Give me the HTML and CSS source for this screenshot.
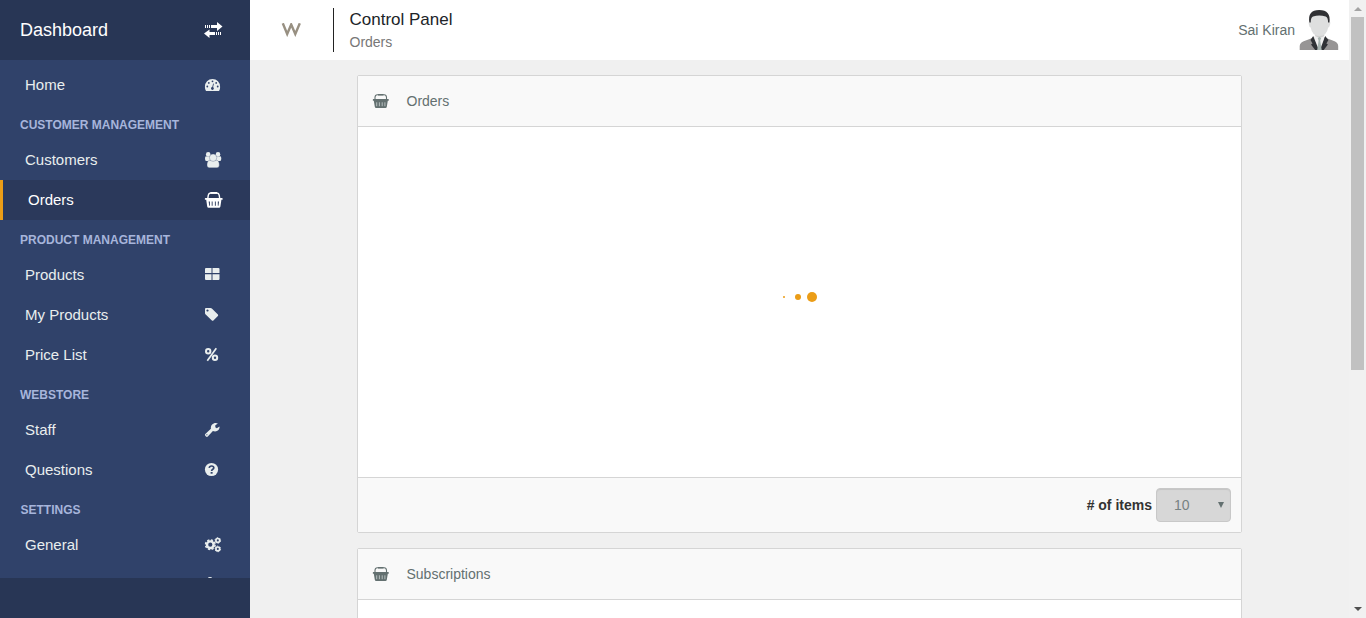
FILE: index.html
```html
<!DOCTYPE html>
<html lang="en">
<head>
<meta charset="utf-8">
<title>Control Panel</title>
<link rel="stylesheet" href="styles.css">
</head>
<body>
<svg class="defs" width="0" height="0">
  <symbol id="basket" viewBox="0 0 20 20">
    <path d="M3.800 8.500 4.300 5.200Q4.700 3 6.500 3H13Q14.800 3 15.200 5.200L15.700 8.500" fill="none" stroke="currentColor" stroke-width="1.400"/>
    <path d="M6.500 2h6.500v1.800H6.500z"/>
    <path fill-rule="evenodd" d="M1.500 8h16.500q.7 0 .7.900t-.7.900h-.6l-1 6.700q-.2 1.200-1.400 1.200H4.600Q3.400 17.700 3.200 16.500L2.200 9.800h-.7q-.7 0-.7-.9T1.500 8zM4.700 11.500l.5 4.300h.7V11.500zM7.700 11.500v4.300h.9V11.500zM10.900 11.500v4.300h.9V11.500zM13.800 11.500v4.300h.7l.5-4.300z"/>
  </symbol>
  <symbol id="basket-small" viewBox="0 0 18 18">
    <path d="M3 7.500V5.300Q3.200 2.700 5.300 2.700h6.900Q14.300 2.700 14.500 5.300V7.500" fill="none" stroke="currentColor" stroke-width="1.100"/>
    <path d="M6 2h5.500v1.500H6z"/>
    <path d="M1.300 7h15q.5 0 .5.900t-.5.900h-.5l-1 5.900q-.2 1.300-1.300 1.300H4.200Q3 16 2.800 14.700L1.800 8.800h-.5Q.8 8.800.8 7.900T1.300 7z"/>
    <path d="M4.700 10.300v3.900M7.400 10.300v3.900M10.200 10.300v3.900M12.900 10.300v3.900" stroke="#b7bfbf" stroke-width="1"/>
  </symbol>
</svg>
<div class="app">
  <aside class="sidebar">
    <div class="brand"><span>Dashboard</span>
      <svg class="icon" viewBox="0 0 20 20"><path d="M1 5h1v3H1zM3 5h1v3H3zM5 5h1v3H5zM7 5h6V2l5.500 4.500L13 11V8H7zM5.500 9.500V12H11v3H5.500v3L0 13.500zM12 12h1v3h-1zM14 12h1v3h-1zM16 12h1v3h-1z"/></svg>
    </div>
    <nav class="menu">
      <a class="item"><span>Home</span><svg class="icon" viewBox="0 0 20 20"><path fill-rule="evenodd" d="M8.500 4a7.600 7.600 0 0 1 7.600 7.900c0 1.500-.4 3-1.100 4.100H2A7.900 7.900 0 0 1 .9 11.900 7.600 7.600 0 0 1 8.500 4z"/><g fill="#30426a"><circle cx="3.300" cy="11.500" r=".9"/><circle cx="4.800" cy="7.900" r=".9"/><circle cx="8.500" cy="6.300" r=".9"/><circle cx="12.200" cy="7.900" r=".9"/><circle cx="13.700" cy="11.500" r=".9"/><circle cx="8.400" cy="13.500" r="1.400"/><path d="m9.100 8.500.8.200-1.100 4.600-.8-.2z"/></g></svg></a>
      <h2 class="section">CUSTOMER MANAGEMENT</h2>
      <a class="item"><span>Customers</span><svg class="icon" viewBox="0 0 20 20"><circle cx="4.200" cy="4.400" r="2.300"/><circle cx="14" cy="4.400" r="2.300"/><path d="M1 8.500Q1 6 2.500 6.400h4V11H2.300Q1 11 1 8.500zM17.300 8.500q0-2.500-1.500-2.100h-4V11H16q1.300 0 1.300-2.500z"/><g stroke="#30426a" stroke-width=".3"><path d="M3 15q0-4.500 2.800-4.800h6.700q2.800.3 2.800 4.800 0 2.800-2.300 2.800H5.300Q3 17.800 3 15z"/><circle cx="9.100" cy="7.700" r="3.700"/></g></svg></a>
      <a class="item active"><span>Orders</span><svg class="icon"><use href="#basket"/></svg></a>
      <h2 class="section">PRODUCT MANAGEMENT</h2>
      <a class="item"><span>Products</span><svg class="icon" viewBox="0 0 20 20"><path d="M2 3h5.500v5H1V4q0-1 1-1zM8.500 3h6q1 0 1 1v4h-7zM1 9.300h6.500V15H2q-1 0-1-1zM8.500 9.300h7V14q0 1-1 1h-6z"/></svg></a>
      <a class="item"><span>My Products</span><svg class="icon" viewBox="0 0 20 20"><path fill-rule="evenodd" d="M1 4q0-1 1-1h4.400q1 0 1.700.7l5.800 5.700q.6.700 0 1.500l-4.500 4.500q-.8.700-1.500 0L1.700 9.600Q1 9 1 8zM3.500 4.400a1.100 1.100 0 1 0 .01 0z"/></svg></a>
      <a class="item"><span>Price List</span><svg class="icon" viewBox="0 0 20 20"><path d="M12.300 3.300 3.300 15.800" stroke="currentColor" stroke-width="1.700"/><g fill="none" stroke="currentColor" stroke-width="2"><circle cx="4.200" cy="6.200" r="2.200"/><circle cx="11" cy="12.800" r="2.200"/></g></svg></a>
      <h2 class="section">WEBSTORE</h2>
      <a class="item"><span>Staff</span><svg class="icon" viewBox="0 0 20 20"><path fill-rule="evenodd" d="M8.900 11.100 3.800 16.600q-.9.800-1.800 0l-.7-.8q-.8-.9 0-1.700L6.900 8.700C6.500 5.200 9 3 11.700 3q1.200 0 2.200.6L11.300 5.300v2l1.500.9 2.700-1.700c.4 2.500-1.700 4.900-4.400 4.900q-1.200 0-2.200-.3zM2.900 14.200a.6.600 0 1 0 .01 0z"/></svg></a>
      <a class="item"><span>Questions</span><svg class="icon" viewBox="0 0 20 20"><circle cx="7.500" cy="9.500" r="6.600"/><path d="M5.200 7.900Q5.500 6 7.600 6t2.200 1.700c0 1.600-2.200 1.500-2.200 3.400" fill="none" stroke="#30426a" stroke-width="1.700"/><path d="M6.600 12h2v1.700h-2z" fill="#30426a"/></svg></a>
      <h2 class="section settings">SETTINGS</h2>
      <a class="item"><span>General</span><svg class="icon" viewBox="0 0 20 20"><g fill="none" stroke="currentColor"><circle cx="6.300" cy="9.700" r="3.300" stroke-width="2.400"/><circle cx="6.300" cy="9.700" r="4.800" stroke-width="1.500" stroke-dasharray="2.200 1.570"/><circle cx="13.800" cy="5.400" r="1.900" stroke-width="1.700"/><circle cx="13.800" cy="5.400" r="2.800" stroke-width=".9" stroke-dasharray="1.500 1.430"/><circle cx="13.800" cy="13.900" r="1.900" stroke-width="1.700"/><circle cx="13.800" cy="13.900" r="2.800" stroke-width=".9" stroke-dasharray="1.500 1.430"/></g></svg></a>
      <a class="item"><span></span><svg class="icon" viewBox="0 0 20 20"><path d="M4 3q0-1 2-1t2 1v12H4z"/></svg></a>
    </nav>
    <div class="sidebar-footer"></div>
  </aside>
  <div class="page">
    <header class="topbar">
      <svg class="logo" viewBox="0 0 20 14"><path d="M1.800.300 6.200 11 10.200 1.500 14.300 11 18.800.300" fill="none" stroke="#989082" stroke-width="2.400"/></svg>
      <div class="heading"><div class="title">Control Panel</div><div class="crumb">Orders</div></div>
      <div class="user"><span>Sai Kiran</span>
        <svg class="avatar" viewBox="-.7 0 40 40"><path d="M0 40v-4q0-4 6-5.500l8-3h11l8 3q5.500 1.500 5.500 5.500v4z" fill="#979595"/><path d="M15.500 24h9v6L21 40h-3l-4-11z" fill="#efefef"/><path d="M15.500 24h9v2q-4.500 3-9 0z" fill="#cfcfcf"/><path d="m13.500 26-2.700 4 2 3.500-1.500 1L15.500 40h3.700zM25.500 26l3.200 4-2 3.500 1.500 1L24 40h-3.700z" fill="#303236"/><path d="m18 28 1.700-1 1.800 1-1 2.500L22 40h-4.500l1.400-9.500z" fill="#a8b5b2"/><path d="M10 11Q9.300 2 19.700 2T29.500 11q2 1 .5 4.500-.3 2-1.500 2-1.500 8.500-8.800 8.500t-8.700-8.500q-1.300 0-1.500-2Q8.200 12 10 11z" fill="#dedfdf"/><path d="M9.700 12.500Q7.500 0 19.500 0t10.200 12.500h-1.300q0-5-2.400-6Q19.500 4.500 13.300 6.500q-2.300 1-2.300 6z" fill="#303134"/></svg>
      </div>
    </header>
    <main class="content">
      <section class="card">
        <div class="card-head"><svg class="icon"><use href="#basket-small"/></svg><span>Orders</span></div>
        <div class="card-body"><span class="dot small"></span><span class="dot medium"></span><span class="dot large"></span></div>
        <div class="card-foot"><b>#&nbsp;of items</b><div class="select"><span>10</span><i></i></div></div>
      </section>
      <section class="card">
        <div class="card-head"><svg class="icon"><use href="#basket-small"/></svg><span>Subscriptions</span></div>
        <div class="card-body"></div>
      </section>
    </main>
  </div>
  <div class="scrollbar"><i class="arrow up"></i><div class="thumb"></div><i class="arrow down"></i></div>
</div>
</body>
</html>
```

FILE: styles.css
```css
* { box-sizing: border-box; }
body { margin: 0; overflow: hidden; font: 14px/20px "Liberation Sans", Arial, sans-serif; color: #333; }
.defs { display: none; }
.app { display: flex; height: 618px; }
.icon { width: 20px; height: 20px; flex: none; fill: currentColor; }

.sidebar { display: flex; flex-direction: column; width: 250px; background: #30426a; color: #e9eeee; }
.brand { display: flex; flex: none; align-items: center; justify-content: space-between; height: 60px; padding: 0 26px 0 20px; background: #283655; color: #fff; font-size: 18px; }
.menu { flex: 1; min-height: 0; padding-top: 5px; overflow: hidden; }
.item { display: flex; align-items: center; justify-content: space-between; height: 40px; padding: 0 26px 0 25px; font-size: 15px; }
.item.active { border-left: 3px solid #eb9d17; background: #2b395b; color: #fff; }
.section { height: 35px; margin: 0; padding: 10px 20px 0; font-size: 12px; line-height: 20px; color: #a7b5db; white-space: nowrap; }
.settings { padding-left: 20.5px; }
.sidebar-footer { flex: none; height: 40px; background: #283655; }

.page { display: flex; flex-direction: column; width: 1099px; background: #f0f0f0; }
.topbar { display: flex; flex: none; height: 60px; background: #fff; }
.logo { width: 20px; height: 14px; margin: 23px 0 0 31px; }
.heading { height: 44px; margin: 8px 0 0 32px; padding-left: 15.5px; border-left: 1px solid #222; }
.title { height: 22px; padding-top: 2px; font-size: 17px; color: #202428; }
.crumb { padding-top: 2px; color: #777; }
.user { display: flex; gap: 4px; margin: 10px 10px 0 auto; line-height: 40px; color: #637070; }
.avatar { width: 40px; height: 40px; }

.content { display: flex; flex-direction: column; gap: 15px; min-height: 0; padding: 15px 107px 0; overflow: hidden; }
.card { flex: none; border: 1px solid #d5d5d5; border-radius: 2px; background: #fff; }
.card-head { display: flex; align-items: center; gap: 16.5px; height: 51px; padding-left: 14px; border-bottom: 1px solid #d5d5d5; background: #f9f9f9; color: #637070; }
.card-head .icon { width: 18px; height: 18px; }
.card-body { display: flex; align-items: center; justify-content: center; height: 350px; padding-bottom: 10px; }
.dot { border-radius: 50%; background: #eb9d17; }
.small { width: 2px; height: 2px; margin-right: 10px; }
.medium { width: 6px; height: 6px; margin-right: 6px; }
.large { width: 10px; height: 10px; }
.card-foot { display: flex; align-items: center; justify-content: flex-end; gap: 4px; height: 55px; padding-right: 10px; border-top: 1px solid #d5d5d5; background: #f9f9f9; }
.select { display: flex; align-items: center; justify-content: space-between; width: 75px; height: 34px; padding: 0 6px 0 17px; border: 1px solid #c8c8c8; border-radius: 4px; background: #d7d7d7; box-shadow: inset 0 1px 1px #c5c5c5; color: #778282; }
.select i { border: 3px solid transparent; border-top: 6px solid #637070; border-bottom: 0; }

.scrollbar { display: flex; flex-direction: column; align-items: center; width: 17px; background: #f1f1f1; }
.arrow { border: 4px solid transparent; }
.up { margin-top: 7px; border-top: 0; border-bottom-color: #a3a3a3; }
.thumb { width: 13px; height: 353px; margin-top: 6px; background: #c1c1c1; }
.down { margin: auto 0 7px; border-bottom: 0; border-top-color: #505050; }
```
